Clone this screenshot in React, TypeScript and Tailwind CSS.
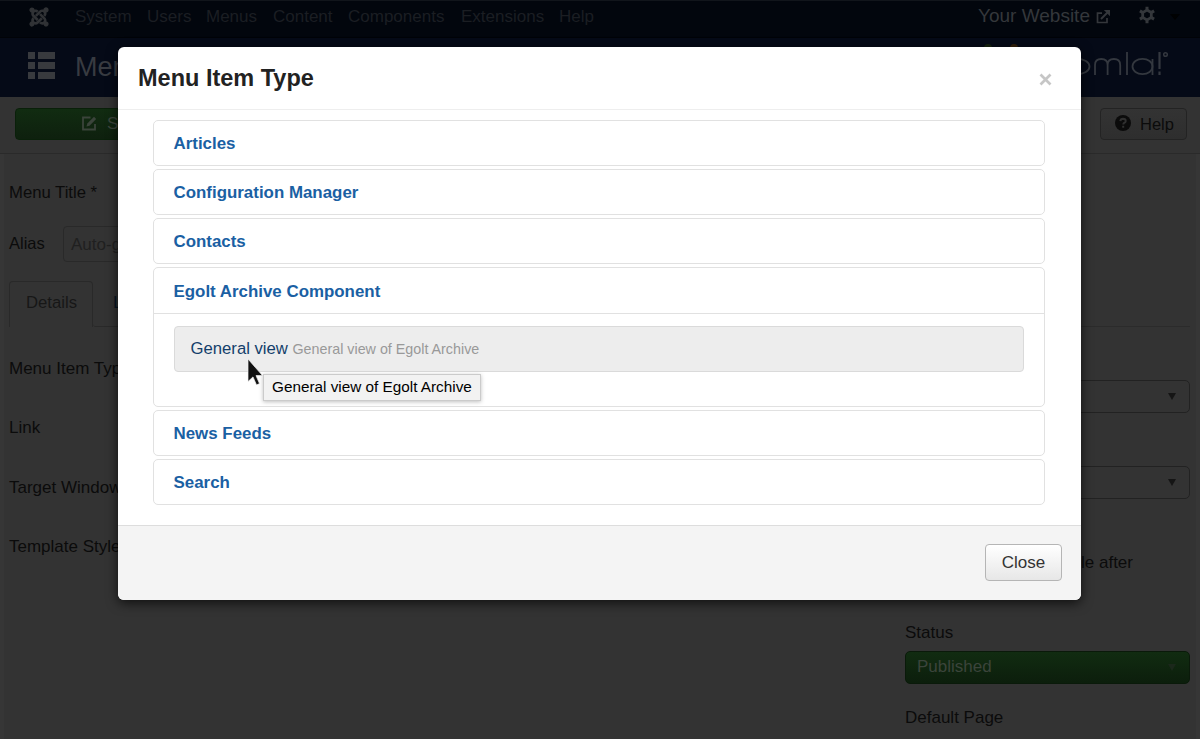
import React from 'react';
import { FaJoomla } from 'react-icons/fa';

const nav: [string, string][] = [
  ['System', 'w-[72px]'],
  ['Users', 'w-[59px]'],
  ['Menus', 'w-[67px]'],
  ['Content', 'w-[75px]'],
  ['Components', 'w-[113px]'],
  ['Extensions', 'w-[98px]'],
  ['Help', 'w-[50px]'],
];

function OutIcon() {
  return (
    <svg width="14" height="14" viewBox="0 0 14 14" fill="none" stroke="currentColor" strokeWidth="1.7">
      <path d="M6 3.2H1.5v9.3H11V8" />
      <path d="M5 9 12 2" strokeWidth="2" />
      <path d="M7.8 0H14v6.2Z" fill="currentColor" stroke="none" />
    </svg>
  );
}

function TopBar() {
  return (
    <header className="flex h-[38px] items-center border-b border-[#010307] border-t border-t-[#11151b] bg-[#02060d] text-[17px] text-[#1b1e23]">
      <FaJoomla className="mb-[5px] ml-7 mr-[25px] shrink-0 text-[#303235]" size={22} />
      <nav className="flex pb-[5px]">
        {nav.map(([label, width]) => (
          <span key={label} className={width}>{label}</span>
        ))}
      </nav>
      <div className="ml-auto flex items-center pb-[5px] text-[#34373b]">
        <span className="w-[119px] whitespace-nowrap pl-px text-[19px]">Your Website</span>
        <OutIcon />
        <svg className="-mt-[3px] ml-[28px]" width="18" height="18" viewBox="0 0 18 18">
          <path fill="none" stroke="currentColor" strokeWidth="2.8" d="M9 4 13.3 6.5v5L9 14 4.7 11.5v-5Z" />
          <path stroke="currentColor" strokeWidth="3" d="M9 0.8v3M9 14.2v3M1.9 4.9l2.6 1.5M13.5 11.6l2.6 1.5M1.9 13.1l2.6-1.5M13.5 6.4l2.6-1.5" />
        </svg>
        <svg className="ml-[14px] mr-[20px]" width="10" height="6" viewBox="0 0 10 6"><path fill="#000102" d="M0 0h10L5 6Z" /></svg>
      </div>
    </header>
  );
}

function TitleBar() {
  return (
    <div className="flex h-[59px] items-center justify-between bg-[#050a17] pl-7 pr-[32px]">
      <div className="flex items-center">
        <svg width="27" height="27" viewBox="0 0 27 27" fill="#383a3e" className="-mt-[5px]">
          <path d="M0 0h7v7H0zM10 0h17v7H10zM0 10h7v7H0zM10 10h17v7H10zM0 20h7v7H0zM10 20h17v7H10z" />
        </svg>
        <span className="ml-5 whitespace-nowrap text-[27px] text-[#383b41]">Menus</span>
      </div>
      <svg width="190" height="59" viewBox="0 0 190 59" fill="none" stroke="#34383f" strokeWidth="1.8">
        <circle cx="10" cy="10" r="4" fill="#17240f" stroke="none" />
        <circle cx="36" cy="10" r="4" fill="#33200b" stroke="none" />
        <ellipse cx="99" cy="28.5" rx="12.5" ry="7.7" />
        <path d="M117 37V27q0-6 6.3-6t6.3 6v10M129.600 27q0-6 6.300-6t6.300 6v10M149 14v23" />
        <ellipse cx="164.500" cy="28.500" rx="10" ry="7.700" />
        <path d="M174.500 21v16" />
        <path d="M181.500 14v17M181.500 33.500v3.500" strokeWidth="2.200" />
        <circle cx="187.500" cy="16.500" r="1.800" strokeWidth="1.500" />
      </svg>
    </div>
  );
}

function Toolbar() {
  return (
    <div className="flex h-[57px] items-start justify-between border-b border-[#2a2a2a] pl-[15px] pr-[13px] pt-[11px]">
      <div className="flex h-8 w-[190px] items-center rounded border border-[#0a200a] bg-gradient-to-b from-[#112c11] to-[#0e200e] pl-[66px] text-[17px] text-[#3b443b]">
        <svg className="-mt-[2px]" width="15" height="15" viewBox="0 0 15 15" fill="none" stroke="currentColor" strokeWidth="1.8">
          <path d="M8.5 1.5H1v12h12V8" />
          <path d="M4.500 10.500 5.300 7.500 12 .8l2.200 2.200-6.700 6.700Z" fill="currentColor" stroke="none" />
        </svg>
        <span className="ml-[10px]">Save</span>
      </div>
      <div className="flex h-8 w-[87px] items-center rounded border border-[#232323] bg-gradient-to-b from-[#333] to-[#2e2e2e] pl-[14px] text-[16.5px] text-[#0b0b0b]">
        <svg className="-mt-[2px]" width="16" height="16" viewBox="0 0 16 16">
          <circle cx="8" cy="8" r="8" fill="currentColor" />
          <path d="M5.300 6.200q.2-2.500 2.800-2.500 2.600.1 2.600 2.200 0 1.400-1.500 2-.9.4-.9 1.500M8.200 10.800v2" fill="none" stroke="#303030" strokeWidth="2" />
        </svg>
        <span className="ml-[9px]">Help</span>
      </div>
    </div>
  );
}

function Arrow({ color }: { color: string }) {
  return (
    <svg width="8" height="7" viewBox="0 0 8 7"><path fill={color} d="M0 0h8L4 7Z" /></svg>
  );
}

function MainForm() {
  return (
    <main className="flex flex-1 justify-between border-x-4 border-[#363636] pl-[5px] pr-[6px] text-[17px] leading-5 text-[#0b0b0b]">
      <div className="flex w-[870px] flex-col">
        <div className="mt-[29px] h-5 text-[16.7px]">Menu Title *</div>
        <div className="mt-[23px] flex h-9 items-start">
          <span className="mt-[7px] w-[54px] text-[16.5px]">Alias</span>
          <div className="h-9 w-[250px] rounded border border-[#292929] pl-[7px] pt-[8px] text-[#202020]">Auto-gen</div>
        </div>
        <div className="mt-[19px] flex h-[46px]">
          <div className="w-[84px] rounded-t border border-b-0 border-[#292929] pl-4 pt-[11px] text-[16.7px] text-[#171717]">Details</div>
          <div className="flex-1 rounded-bl-[3px] border-b border-[#292929] pl-5 pt-[12px] text-[#071523]">Link Type</div>
        </div>
        <div className="mt-[32px] h-5">Menu Item Type *</div>
        <div className="mt-[39px] h-5">Link</div>
        <div className="mt-[40px] h-5">Target Window</div>
        <div className="mt-[39px] h-5">Template Style</div>
      </div>
      <div className="flex w-[285px] flex-col">
        <div className="mt-[172px] h-px bg-[#2b2b2b]" />
        <div className="mt-[53px] flex h-[33px] items-center justify-end rounded-[5px] border border-[#222] pr-[13px]"><Arrow color="#151515" /></div>
        <div className="mt-[53px] flex h-[33px] items-center justify-end rounded-[5px] border border-[#222] pr-[13px]"><Arrow color="#151515" /></div>
        <div className="mt-[54px] w-[228px] text-right">le after</div>
        <div className="mt-[50px] h-5">Status</div>
        <div className="mt-[8px] flex h-[33px] items-center justify-between rounded-[5px] border border-[#0a1a0a] bg-gradient-to-b from-[#112c11] to-[#0c1e0c] pb-px pl-[11px] pr-[13px] text-[#3b443b]">
          Published<Arrow color="#1b281b" />
        </div>
        <div className="mt-[24px] h-5">Default Page</div>
      </div>
    </main>
  );
}

function Panel({ title, children }: { title: string; children?: React.ReactNode }) {
  return (
    <section className="rounded-[5px] border border-[#e1e1e1]">
      <h2 className={`${children ? 'h-[45px]' : 'h-[44px]'} flex items-center pl-[19.500px] pt-[2px] text-[16.9px] font-bold text-[#1a60a3]`}>{title}</h2>
      {children}
    </section>
  );
}

function Modal() {
  return (
    <div className="absolute left-[118px] top-[47px] flex h-[553px] w-[963px] flex-col overflow-hidden rounded-[6px] bg-white shadow-[0_3px_12px_rgba(0,0,0,0.7)]">
      <div className="flex h-[63px] items-center justify-between border-b border-[#eee] pl-[20px] pr-[29px]">
        <h1 className="pt-[2px] text-[23.5px] font-bold text-[#222]">Menu Item Type</h1>
        <svg className="mt-[2px]" width="13" height="13" viewBox="0 0 13 13"><path d="M1.500 1.500l10 10M11.500 1.500l-10 10" stroke="#c6c6c6" strokeWidth="2.700" /></svg>
      </div>
      <div className="flex flex-1 flex-col gap-[3px] pl-[35px] pr-[36px] pt-[10px]">
        <Panel title="Articles" />
        <Panel title="Configuration Manager" />
        <Panel title="Contacts" />
        <Panel title="Egolt Archive Component">
          <div className="h-[93px] border-t border-[#e1e1e1] pl-[19.500px] pr-5 pt-3">
            <div className="flex h-[46px] items-center rounded-[4px] border border-[#dadada] bg-[#ededed] pl-4">
              <span className="w-[102px] whitespace-nowrap text-[16.7px] text-[#143f6b]">General view</span>
              <span className="pt-px text-[14.3px] text-[#999]">General view of Egolt Archive</span>
            </div>
          </div>
        </Panel>
        <Panel title="News Feeds" />
        <Panel title="Search" />
      </div>
      <footer className="flex h-[75px] items-start justify-end border-t border-[#ddd] bg-[#f4f4f4] pr-[19px] pt-[18px]">
        <button className="h-[37px] w-[77px] rounded-[4px] border border-[#b5b5b5] bg-gradient-to-b from-white to-[#e7e7e7] text-[17px] text-[#333]">Close</button>
      </footer>
    </div>
  );
}

export default function App() {
  return (
    <div className="relative flex h-[739px] w-[1200px] flex-col overflow-hidden bg-[#333] font-['Liberation_Sans',Arial,sans-serif]">
      <TopBar />
      <TitleBar />
      <Toolbar />
      <MainForm />
      <Modal />
      <div className="absolute left-[263px] top-[374px] flex h-[27px] w-[218px] items-center whitespace-nowrap border border-[#cbcbcb] bg-[#f2f2f2] pl-2 text-[15.3px] text-black shadow-[0_1px_4px_rgba(0,0,0,0.25)]">
        General view of Egolt Archive
      </div>
      <svg className="absolute left-[247px] top-[358px]" width="17" height="29" viewBox="0 0 17 29">
        <path fill="#111" stroke="#f4f4f4" strokeWidth="0.700" d="M1 1v22.500l5-4.600 3.500 8 3-1.300-3.500-8H15.500Z" />
      </svg>
    </div>
  );
}
